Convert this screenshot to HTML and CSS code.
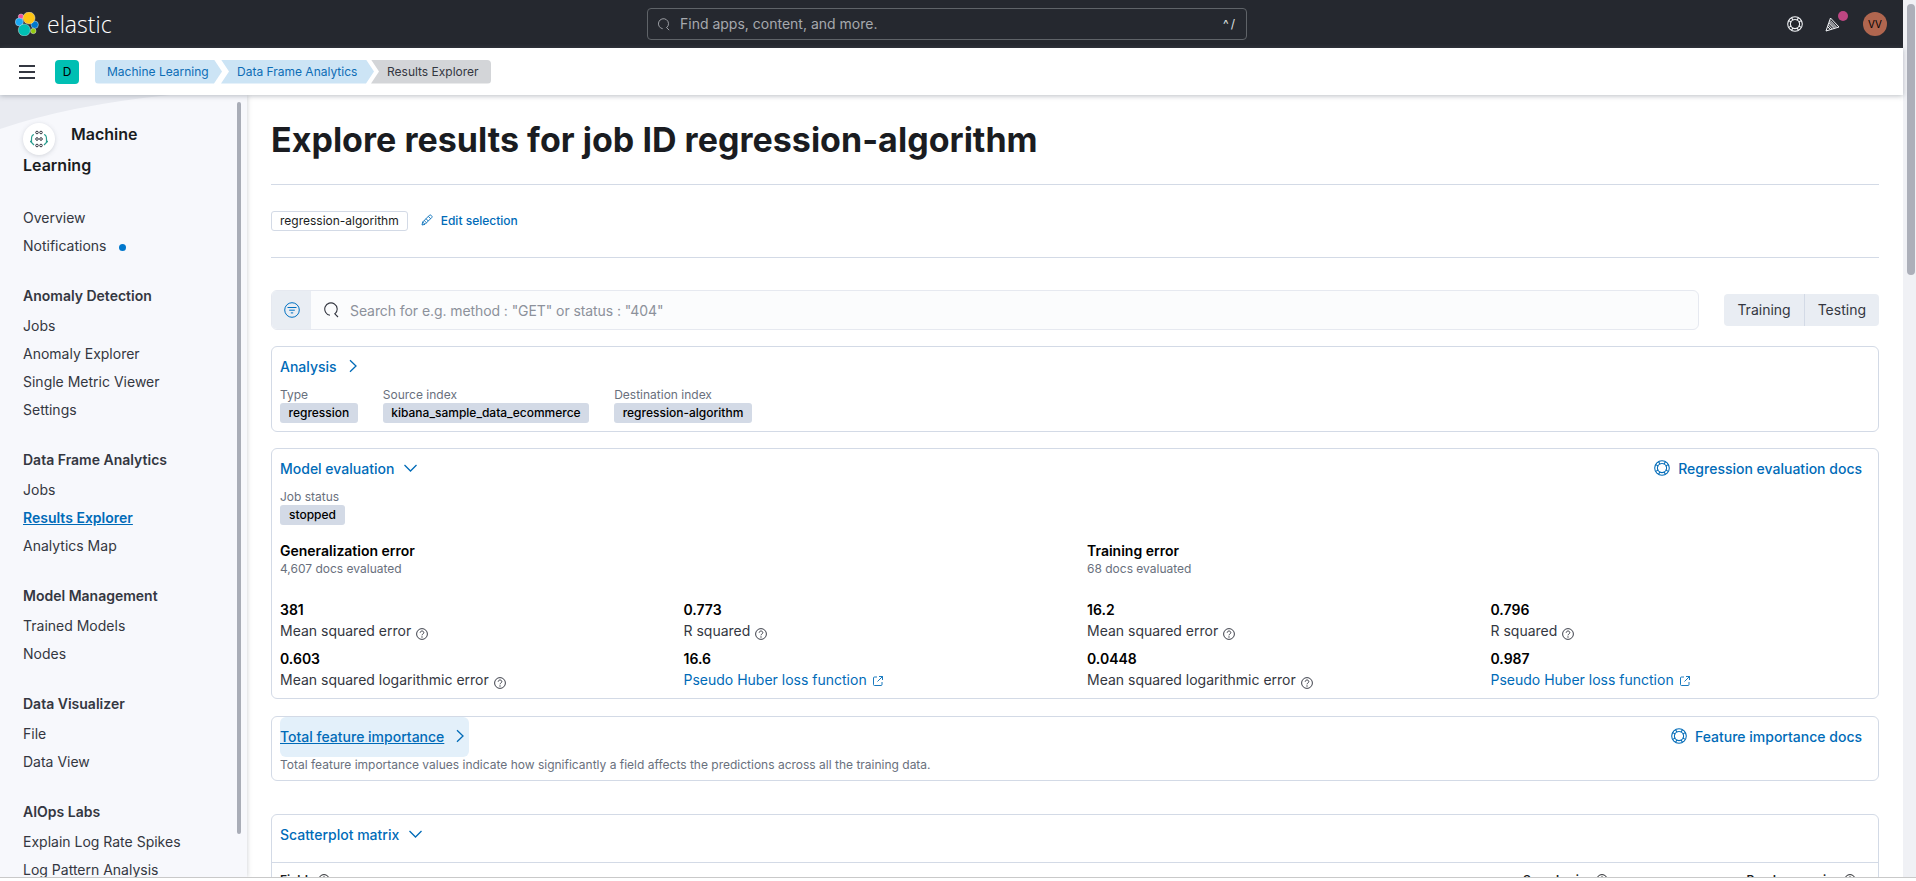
FILE: index.html
```html
<!DOCTYPE html>
<html lang="en">
  <head>
    <meta charset="UTF-8" />
    <title>Results Explorer - Machine Learning - Elastic</title>
    <link rel="stylesheet" href="styles.css">
  </head>
  <body>
    <svg class="icon-defs" width="0" height="0">
      <symbol id="i-help" viewBox="0 0 16 16">
        <g fill="none" stroke="currentColor" stroke-width="1.05">
          <circle cx="8" cy="8" r="7.3" />
          <circle cx="8" cy="8" r="4.6" />
          <path d="M1.9 4.6 4.4 6.2M4.6 1.9 6.2 4.4M11.4 1.9 9.8 4.4M14.1 4.6 11.6 6.2M1.9 11.4 4.4 9.8M4.6 14.1 6.2 11.6M11.4 14.1 9.8 11.6M14.1 11.4 11.6 9.8" />
        </g>
      </symbol>
      <symbol id="i-search" viewBox="0 0 16 16">
        <g fill="none" stroke="currentColor" stroke-width="1.1">
          <path d="M12.2 11.6A6.2 6.2 0 1 0 7 13.2" />
          <path d="M11.4 11.4 15 15" />
        </g>
      </symbol>
      <symbol id="i-question" viewBox="0 0 12 12">
        <g fill="none" stroke="currentColor" stroke-width=".95">
          <circle cx="6" cy="6" r="5.4" />
          <path d="M4.2 4.7C4.3 3.6 5.1 3 6 3c1 0 1.8.7 1.8 1.6C7.8 6 6 6 6 7.3" />
        </g>
        <circle cx="6" cy="9" r=".65" fill="currentColor" />
      </symbol>
      <symbol id="i-popout" viewBox="0 0 12 12">
        <g fill="none" stroke="currentColor" stroke-width=".9">
          <path d="M5 2H2.5a1 1 0 0 0-1 1v6.5a1 1 0 0 0 1 1H9a1 1 0 0 0 1-1V7" />
          <path d="M7 1.5h3.5V5M10.5 1.5 5.5 6.5" />
        </g>
      </symbol>
      <symbol id="i-right" viewBox="0 0 16 16">
        <path d="M4 2.2 10 8 4 13.8" fill="none" stroke="currentColor" stroke-width="1.3" />
      </symbol>
      <symbol id="i-down" viewBox="0 0 16 16">
        <path d="M1.5 5 7.5 11 13.5 5" fill="none" stroke="currentColor" stroke-width="1.3" />
      </symbol>
    </svg>

    <div class="frame">
      <div class="page">
        <header class="top-bar">
          <div class="brand">
            <svg class="brand-logo" viewBox="0 0 24 24">
              <g stroke="#e6e8ec" stroke-width=".45">
                <circle cx="6" cy="4.7" r="2.7" fill="#f04e98" />
                <circle cx="4.3" cy="10" r="4" fill="#1ba9f5" />
                <circle cx="19.7" cy="12.7" r="3.7" fill="#0077cc" />
                <circle cx="18.3" cy="19" r="2.7" fill="#93c90e" />
                <circle cx="14" cy="6" r="6" fill="#fec514" />
                <circle cx="9.3" cy="18" r="6" fill="#00bfb3" />
              </g>
            </svg>
            <span class="brand-name">elastic</span>
          </div>
          <div class="global-search">
            <svg class="search-glyph"><use href="#i-search" /></svg>
            <span class="global-search-text">Find apps, content, and more.</span>
            <span class="global-search-key">^/</span>
          </div>
          <div class="top-actions">
            <svg class="icon top-help"><use href="#i-help" /></svg>
            <span class="cheer">
              <svg class="icon" viewBox="0 0 16 16">
                <g fill="none" stroke="currentColor" stroke-width="1">
                  <path d="M5.5 2 1 15l13-4z" />
                  <path d="M3.8 7 9 12.4M2.6 10.5 5.3 13.5M5.2 4.5 11.4 11M4.4 5.8 10.2 11.8M3.2 8.8 7 12.9" />
                </g>
              </svg>
              <span class="cheer-dot"></span>
            </span>
            <span class="avatar">VV</span>
          </div>
        </header>

        <nav class="crumb-bar">
          <span class="menu-toggle"><i></i><i></i><i></i></span>
          <span class="space-badge">D</span>
          <div class="crumbs">
            <a class="crumb crumb-first">Machine Learning</a>
            <a class="crumb crumb-mid">Data Frame Analytics</a>
            <span class="crumb crumb-last">Results Explorer</span>
          </div>
        </nav>

        <div class="workspace">
          <aside class="sidebar">
            <svg class="sidebar-deco" viewBox="0 0 170 36" preserveAspectRatio="none">
              <path d="M0 0H170Q70 10 0 34z" fill="#e9ebf1" />
            </svg>
            <span class="sidebar-scroll"></span>
            <h2 class="app-title">
              <span class="app-icon">
                <svg width="18" height="18" viewBox="0 0 18 18">
                  <g fill="none" stroke="#343741" stroke-width="1">
                    <circle cx="7" cy="2.5" r="1.3" />
                    <circle cx="11" cy="2.5" r="1.3" />
                    <circle cx="7" cy="9" r="1.3" />
                    <circle cx="11" cy="9" r="1.3" />
                    <circle cx="7" cy="15.5" r="1.3" />
                    <circle cx="11" cy="15.5" r="1.3" />
                  </g>
                  <g fill="none" stroke="#2a9d8f" stroke-width="1.2">
                    <path d="M4 4.5C1.5 5 1.5 7 1.5 9v3.5L4 15M1.5 12.5 0 11" />
                    <path d="M14 4.5c2.5.5 2.5 2.5 2.5 4.5v3.5L14 15M16.5 12.5 18 11" />
                  </g>
                </svg>
              </span>Machine<br />Learning
            </h2>

            <ul class="side-group">
              <li>Overview</li>
              <li>Notifications <span class="notify-dot"></span></li>
            </ul>
            <h3 class="side-heading">Anomaly Detection</h3>
            <ul class="side-group">
              <li>Jobs</li>
              <li>Anomaly Explorer</li>
              <li>Single Metric Viewer</li>
              <li>Settings</li>
            </ul>
            <h3 class="side-heading">Data Frame Analytics</h3>
            <ul class="side-group">
              <li>Jobs</li>
              <li class="is-current">Results Explorer</li>
              <li>Analytics Map</li>
            </ul>
            <h3 class="side-heading">Model Management</h3>
            <ul class="side-group">
              <li>Trained Models</li>
              <li>Nodes</li>
            </ul>
            <h3 class="side-heading">Data Visualizer</h3>
            <ul class="side-group">
              <li>File</li>
              <li>Data View</li>
            </ul>
            <h3 class="side-heading">AIOps Labs</h3>
            <ul class="side-group">
              <li>Explain Log Rate Spikes</li>
              <li>Log Pattern Analysis</li>
            </ul>
          </aside>

          <main class="content">
            <h1 class="page-title">Explore results for job ID regression-algorithm</h1>
            <hr class="rule rule-title" />
            <div class="selection-row">
              <span class="tag">regression-algorithm</span>
              <a class="edit-link">
                <svg class="icon-small" viewBox="0 0 12 12">
                  <path d="M1 11l.7-3L8.5 1.2a1 1 0 0 1 1.4 0l.9.9a1 1 0 0 1 0 1.4L4 10.3zM1.7 8l2.3 2.3M3.2 6.5l2.3 2.3M5 4.7 7.3 7M7.3 2.4l2.3 2.3" fill="none" stroke="currentColor" stroke-width=".9" />
                </svg>
                Edit selection
              </a>
            </div>
            <hr class="rule rule-selection" />

            <div class="query-row">
              <div class="query-box">
                <span class="query-filter">
                  <svg class="icon" viewBox="0 0 16 16">
                    <g fill="none" stroke="currentColor" stroke-width="1">
                      <circle cx="8" cy="8" r="7.3" />
                      <path d="M3.5 5.5h9M5.2 8.2h5.6M6.8 10.9h2.4" />
                    </g>
                  </svg>
                </span>
                <svg class="icon query-search"><use href="#i-search" /></svg>
                <span class="query-text">Search for e.g. method : "GET" or status : "404"</span>
              </div>
              <div class="toggle-group">
                <span class="toggle">Training</span>
                <span class="toggle">Testing</span>
              </div>
            </div>

            <section class="panel panel-analysis">
              <div class="panel-head">
                <a class="panel-toggle">Analysis <svg class="icon-toggle"><use href="#i-right" /></svg></a>
              </div>
              <div class="stat-row">
                <div class="stat"><div class="stat-label">Type</div><span class="badge">regression</span></div>
                <div class="stat"><div class="stat-label">Source index</div><span class="badge">kibana_sample_data_ecommerce</span></div>
                <div class="stat"><div class="stat-label">Destination index</div><span class="badge">regression-algorithm</span></div>
              </div>
            </section>

            <section class="panel panel-eval">
              <div class="panel-head">
                <a class="panel-toggle">Model evaluation <svg class="icon-toggle"><use href="#i-down" /></svg></a>
                <a class="docs-link"><svg class="icon"><use href="#i-help" /></svg>Regression evaluation docs</a>
              </div>
              <div class="stat-label">Job status</div>
              <span class="badge">stopped</span>
              <div class="eval-grid">
                <div class="eval-head">
                  <h4>Generalization error</h4>
                  <p>4,607 docs evaluated</p>
                </div>
                <div class="eval-head">
                  <h4>Training error</h4>
                  <p>68 docs evaluated</p>
                </div>

                <div class="metric"><b>381</b><span>Mean squared error <svg class="icon-small"><use href="#i-question" /></svg></span></div>
                <div class="metric"><b>0.773</b><span>R squared <svg class="icon-small"><use href="#i-question" /></svg></span></div>
                <div class="metric"><b>16.2</b><span>Mean squared error <svg class="icon-small"><use href="#i-question" /></svg></span></div>
                <div class="metric"><b>0.796</b><span>R squared <svg class="icon-small"><use href="#i-question" /></svg></span></div>

                <div class="metric"><b>0.603</b><span>Mean squared logarithmic error <svg class="icon-small"><use href="#i-question" /></svg></span></div>
                <div class="metric"><b>16.6</b><a>Pseudo Huber loss function <svg class="icon-small"><use href="#i-popout" /></svg></a></div>
                <div class="metric"><b>0.0448</b><span>Mean squared logarithmic error <svg class="icon-small"><use href="#i-question" /></svg></span></div>
                <div class="metric"><b>0.987</b><a>Pseudo Huber loss function <svg class="icon-small"><use href="#i-popout" /></svg></a></div>
              </div>
            </section>

            <section class="panel panel-feature">
              <div class="panel-head">
                <a class="panel-toggle is-hover">Total feature importance <svg class="icon-toggle"><use href="#i-right" /></svg></a>
                <a class="docs-link"><svg class="icon"><use href="#i-help" /></svg>Feature importance docs</a>
              </div>
              <p class="panel-note">Total feature importance values indicate how significantly a field affects the predictions across all the training data.</p>
            </section>

            <section class="panel panel-scatter">
              <div class="panel-head">
                <a class="panel-toggle">Scatterplot matrix <svg class="icon-toggle"><use href="#i-down" /></svg></a>
              </div>
              <div class="scatter-fields">
                <span class="scatter-field scatter-grow">Fields <svg class="icon-small"><use href="#i-question" /></svg></span>
                <span class="scatter-field scatter-sample">Sample size <svg class="icon-small"><use href="#i-question" /></svg></span>
                <span class="scatter-field">Random scoring <svg class="icon-small"><use href="#i-question" /></svg></span>
              </div>
            </section>
          </main>
        </div>
      </div>

      <div class="page-scroll"><span class="page-scroll-thumb"></span></div>
    </div>
  </body>
</html>
```

FILE: styles.css
```css
* {
  box-sizing: border-box;
}

html,
body {
  height: 100%;
  margin: 0;
  overflow: hidden;
  background-color: #ffffff;
}

body {
  font-family: "Inter", "Liberation Sans", sans-serif;
  font-size: 14px;
  color: #343741;
}

h1,
h2,
h3,
h4,
p,
ul {
  margin: 0;
  padding: 0;
}

a {
  color: #006bb8;
}

.icon-defs {
  display: block;
  height: 0;
}

.icon {
  width: 16px;
  height: 16px;
  flex: none;
}

.icon-small {
  width: 12px;
  height: 12px;
  flex: none;
}

.icon-toggle {
  width: 16px;
  height: 16px;
  margin-left: 9px;
}

.frame {
  display: flex;
  height: 878px;
  overflow: hidden;
  border-bottom: 1px solid #c9c9c9;
}

.page {
  flex: 1;
  min-width: 0;
  display: flex;
  flex-direction: column;
}

.page-scroll {
  width: 13px;
  background-color: #f0f1f5;
  padding: 4px 1px 0 4px;
}

.page-scroll-thumb {
  display: block;
  height: 271px;
  border-radius: 4px;
  background-color: #acafb9;
}

/* top bar */
.top-bar {
  height: 48px;
  flex: none;
  display: flex;
  align-items: center;
  background-color: #25282f;
  color: #ffffff;
}

.brand {
  width: 647px;
  display: flex;
  align-items: center;
  padding-left: 15px;
}

.brand-logo {
  width: 24px;
  height: 24px;
}

.brand-name {
  margin-left: 8px;
  font-family: "Open Sans", sans-serif;
  font-size: 23px;
  font-weight: 300;
  line-height: 24px;
  color: #ffffff;
}

.global-search {
  width: 600px;
  height: 32px;
  display: flex;
  align-items: center;
  padding: 0 9px 2px;
  border: 1px solid #5f6368;
  border-radius: 4px;
  color: #a6a9ae;
}

.search-glyph {
  width: 13px;
  height: 13px;
  flex: none;
  margin-top: 2px;
}

.global-search-text {
  flex: 1;
  margin-left: 10px;
}

.global-search-key {
  font-size: 12px;
  letter-spacing: 2px;
  color: #dfe0e2;
}

.top-actions {
  flex: 1;
  display: flex;
  align-items: center;
  justify-content: flex-end;
  padding-right: 16px;
}

.top-help {
  margin-right: 22px;
  color: #f5f7fa;
}

.cheer {
  position: relative;
  display: flex;
  margin-right: 22px;
  color: #f5f7fa;
}

.cheer-dot {
  position: absolute;
  top: -5px;
  left: 13px;
  width: 10px;
  height: 10px;
  border-radius: 50%;
  background-color: #bd4682;
}

.avatar {
  width: 24px;
  height: 24px;
  display: flex;
  align-items: center;
  justify-content: center;
  border-radius: 50%;
  background-color: #b0664f;
  font-size: 10px;
  color: #000000;
}

/* breadcrumb bar */
.crumb-bar {
  height: 47px;
  flex: none;
  display: flex;
  align-items: center;
  padding-left: 19px;
  position: relative;
  z-index: 2;
  background-color: #ffffff;
  box-shadow: 0 1px 5px rgba(105, 112, 125, 0.45);
}

.menu-toggle {
  width: 16px;
  height: 14px;
  display: flex;
  flex-direction: column;
  justify-content: space-between;
  margin-right: 20px;
}

.menu-toggle i {
  display: block;
  height: 2px;
  background-color: #343741;
}

.space-badge {
  width: 24px;
  height: 24px;
  display: flex;
  align-items: center;
  justify-content: center;
  margin-right: 16px;
  border-radius: 4px;
  background-color: #00bfb3;
  font-size: 12px;
  color: #000000;
}

.crumbs {
  display: flex;
  height: 24px;
}

.crumb {
  display: flex;
  align-items: center;
  font-size: 12px;
  color: #0d6db5;
  background-color: #cce4f5;
}

.crumb-first {
  width: 127px;
  padding-left: 12px;
  border-radius: 4px 0 0 4px;
  clip-path: polygon(0 0, calc(100% - 8px) 0, 100% 50%, calc(100% - 8px) 100%, 0 100%);
}

.crumb-mid {
  width: 153px;
  margin-left: -1px;
  padding-left: 16px;
  clip-path: polygon(0 0, calc(100% - 8px) 0, 100% 50%, calc(100% - 8px) 100%, 0 100%, 8px 50%);
}

.crumb-last {
  width: 120px;
  margin-left: -3px;
  padding-left: 16px;
  border-radius: 0 4px 4px 0;
  background-color: #d3d5d8;
  color: #343741;
  clip-path: polygon(0 0, 100% 0, 100% 100%, 0 100%, 8px 50%);
}

/* layout */
.workspace {
  flex: 1;
  min-height: 0;
  display: flex;
}

/* side navigation */
.sidebar {
  width: 247px;
  flex: none;
  position: relative;
  overflow: hidden;
  padding: 24px 24px 0 23px;
  background-color: #f7f8fc;
  box-shadow: 1px 0 4px rgba(105, 112, 125, 0.25);
}

.sidebar-deco {
  position: absolute;
  top: 0;
  left: 0;
  width: 170px;
  height: 36px;
}

.sidebar-scroll {
  position: absolute;
  top: 7px;
  left: 237px;
  width: 4px;
  height: 732px;
  border-radius: 2px;
  background-color: #a9adb7;
}

.app-title {
  position: relative;
  font-size: 16px;
  font-weight: 600;
  line-height: 30px;
  color: #1a1c21;
  margin-bottom: 24px;
}

.app-icon {
  display: inline-flex;
  align-items: center;
  justify-content: center;
  width: 32px;
  height: 32px;
  margin: -5px 16px -5px 0;
  border-radius: 50%;
  background-color: #ffffff;
  box-shadow: 0 1px 4px rgba(105, 112, 125, 0.25);
  vertical-align: -8px;
}

.side-group {
  list-style: none;
  margin-bottom: 21px;
}

.side-group li {
  height: 28px;
  line-height: 28px;
  white-space: nowrap;
}

.side-heading {
  height: 31px;
  font-size: 14px;
  font-weight: 600;
  line-height: 29px;
}

.notify-dot {
  display: inline-block;
  width: 7px;
  height: 7px;
  margin-left: 9px;
  border-radius: 50%;
  background-color: #0077cc;
}

.is-current {
  font-weight: 600;
  color: #006bb8;
  text-decoration: underline;
}

/* main column */
.content {
  flex: 1;
  min-width: 0;
  overflow: hidden;
  padding: 25px 24px 0;
  background-color: #ffffff;
}

.page-title {
  font-size: 34px;
  font-weight: 700;
  line-height: 40px;
  letter-spacing: 0.025px;
  color: #1a1c21;
}

.rule {
  height: 1px;
  margin: 0;
  border: 0;
  background-color: #d3dae6;
}

.rule-title {
  margin-top: 24px;
}

.rule-selection {
  margin-top: 26px;
}

.selection-row {
  display: flex;
  align-items: center;
  margin-top: 26px;
  font-size: 12px;
}

.tag {
  height: 20px;
  line-height: 18px;
  padding: 0 8px;
  border: 1px solid #d3dae6;
  border-radius: 3px;
  color: #1a1c21;
}

.edit-link {
  display: flex;
  align-items: center;
  margin-left: 13px;
  padding-bottom: 2px;
  font-weight: 500;
}

.edit-link svg {
  margin-right: 8px;
}

.query-row {
  display: flex;
  align-items: center;
  margin-top: 32px;
}

.query-box {
  flex: 1;
  height: 40px;
  display: flex;
  align-items: center;
  border: 1px solid #e6e9f0;
  border-radius: 6px;
  background-color: #fbfcfd;
  overflow: hidden;
}

.query-filter {
  width: 39px;
  height: 100%;
  display: flex;
  align-items: center;
  justify-content: center;
  background-color: #e9edf3;
  color: #0071c2;
}

.query-search {
  margin-left: 12px;
  color: #343741;
}

.query-text {
  margin-left: 11px;
  letter-spacing: -0.08px;
  color: #8c919b;
}

.toggle-group {
  display: flex;
  height: 32px;
  margin-left: 25px;
  border-radius: 4px;
  overflow: hidden;
  background-color: #e9edf3;
}

.toggle {
  display: flex;
  align-items: center;
  padding: 0 13px 2px;
}

.toggle + .toggle {
  border-left: 1px solid #d3dae6;
}

.panel {
  margin-top: 16px;
  padding: 0 8px;
  border: 1px solid #d3dae6;
  border-radius: 6px;
  background-color: #ffffff;
}

.panel-head {
  height: 40px;
  display: flex;
  align-items: center;
  justify-content: space-between;
}

.panel-toggle {
  display: flex;
  align-items: center;
  height: 40px;
  padding-bottom: 2px;
  font-weight: 500;
}

.docs-link {
  display: flex;
  align-items: center;
  margin-right: 8px;
  padding-bottom: 2px;
  font-weight: 500;
}

.docs-link svg {
  margin-right: 8px;
}

.panel-analysis {
  height: 86px;
}

.stat-row {
  display: flex;
  gap: 25px;
}

.stat-label {
  font-size: 12px;
  line-height: 16px;
  color: #69707d;
}

.badge {
  display: inline-block;
  height: 20px;
  padding: 0 8.5px;
  border-radius: 3px;
  background-color: #d3dae6;
  font-size: 12px;
  font-weight: 500;
  line-height: 20px;
  color: #000000;
}

.panel-eval {
  height: 251px;
}

.panel-eval .badge {
  display: block;
  width: 65px;
  padding: 0 9px;
}

.eval-grid {
  display: grid;
  grid-template-columns: repeat(4, 1fr);
  gap: 8px 24px;
  margin-top: 15px;
}

.eval-head {
  grid-column: span 2;
  margin-bottom: 15px;
}

.eval-head h4 {
  font-size: 14px;
  font-weight: 600;
  line-height: 21px;
  color: #000000;
}

.eval-head p {
  font-size: 12px;
  line-height: 16px;
  color: #69707d;
}

.metric b {
  display: block;
  font-weight: 600;
  line-height: 20px;
  color: #000000;
}

.metric span,
.metric a {
  display: block;
  line-height: 21px;
  white-space: nowrap;
}

.metric svg {
  margin-left: 1px;
  vertical-align: -4px;
}

.metric a svg {
  vertical-align: -2px;
}

.panel-feature {
  height: 65px;
  margin-top: 17px;
}

.is-hover {
  border-radius: 6px;
  background-color: #e3f0fa;
}

.panel-feature .panel-toggle {
  text-decoration: underline;
}

.panel-note {
  font-size: 12px;
  line-height: 16px;
  color: #69707d;
}

.panel-scatter {
  margin-top: 33px;
  height: 120px;
  padding: 0;
}

.panel-scatter .panel-head {
  padding: 0 8px;
  height: 48px;
  border-bottom: 1px solid #d3dae6;
  align-items: flex-start;
}

.scatter-fields {
  display: flex;
  padding: 9px 22px 0 8px;
  font-size: 12px;
  font-weight: 600;
  color: #1a1c21;
}

.scatter-field svg {
  vertical-align: -2px;
}

.scatter-grow {
  flex: 1;
}

.scatter-sample {
  margin-right: 139px;
}
```
